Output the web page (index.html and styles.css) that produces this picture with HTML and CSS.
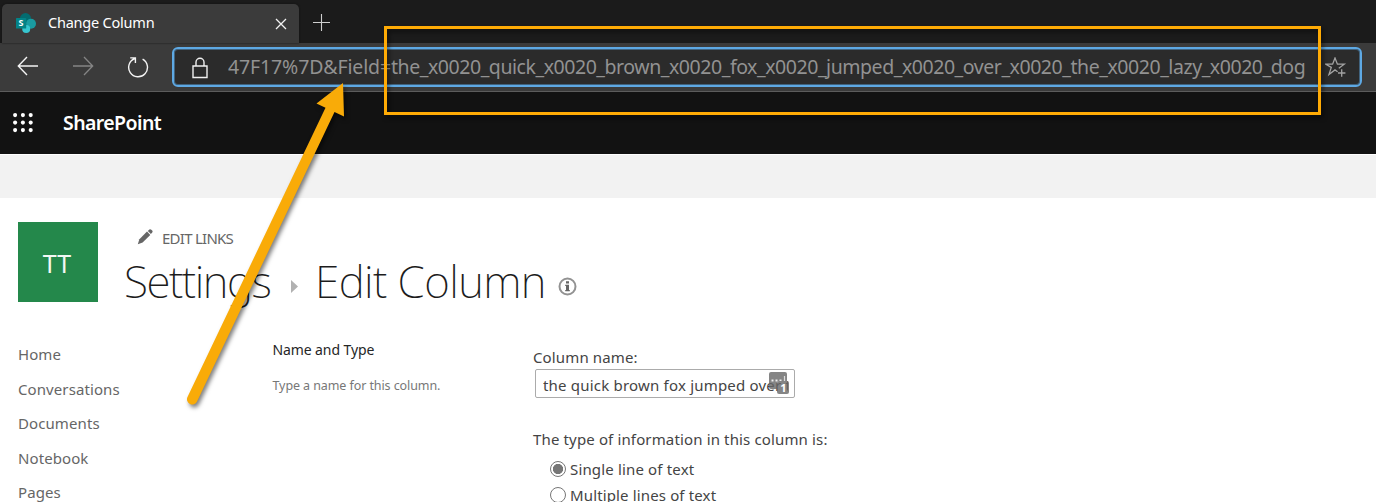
FILE: index.html
```
<!DOCTYPE html>
<html lang="en">
<head>
<meta charset="utf-8">
<title>Change Column</title>
<link rel="stylesheet" href="styles.css">
</head>
<body>
<div class="tabstrip">
  <div class="tab">
    <svg class="favicon" width="20" height="21" viewBox="0 0 20 21">
      <circle cx="9.5" cy="5.7" r="5.6" fill="#036c70"/>
      <circle cx="15" cy="10.8" r="5" fill="#1a9ba1"/>
      <circle cx="10.2" cy="16" r="4" fill="#37c6d0"/>
      <rect x="0" y="5" width="10.2" height="10.5" rx=".6" fill="#038387"/>
      <text class="favicon-letter" x="5.1" y="13.4" text-anchor="middle">S</text>
    </svg>
    <span class="tab-title">Change Column</span>
    <svg class="tab-close" width="12" height="12" viewBox="0 0 12 12"><path d="M1 1l10 10M11 1L1 11" stroke="#f2f2f2" stroke-width="1.3" fill="none"/></svg>
  </div>
  <svg class="tab-new" width="17" height="17" viewBox="0 0 17 17"><path d="M8.5 0v17M0 8.5h17" stroke="#cfcfcf" stroke-width="1.1"/></svg>
</div>
<div class="toolbar">
  <svg class="nav-icon" width="22" height="20" viewBox="0 0 22 20"><path d="M21 10H1.5M10 1L1.3 10l8.700 9" stroke="#f4f4f4" stroke-width="1.4" fill="none"/></svg>
  <svg class="nav-icon forward" width="22" height="20" viewBox="0 0 22 20"><path d="M1 10h19.500M12 1l8.700 9-8.700 9" stroke="#858585" stroke-width="1.3" fill="none"/></svg>
  <svg class="nav-icon reload" width="22" height="22" viewBox="0 0 22 22"><path d="M15.600 3.100A9.400 9.400 0 1 1 7.900 2.500M3.200 1.900h5.200v5.200" stroke="#f4f4f4" stroke-width="1.4" fill="none"/></svg>
  <div class="address">
    <svg class="lock" width="16" height="22" viewBox="0 0 16 22"><path d="M1 9h14v11.500H1zM4 9V5.200a4 4 0 0 1 8 0V9" stroke="#f0f0f0" stroke-width="1.4" fill="none"/></svg>
    <div class="url"><span class="url-head">47F17%7D&amp;Field=</span><span class="url-field">the_x0020_quick_x0020_brown_x0020_fox_x0020_jumped_x0020_over_x0020_the_x0020_lazy_x0020_dog</span></div>
    <svg class="star" width="22" height="22" viewBox="0 0 22 22"><path d="M12.600 14.700L10 12.900l-6 4.500 2.300-7L.8 7.200h6.800L10 1l2.400 6.200h6.800l-5.400 4" stroke="#a3a3a3" stroke-width="1.300" fill="none"/><path d="M16.700 12.300v7.400M13 16h7.400" stroke="#a3a3a3" stroke-width="1.300"/></svg>
  </div>
</div>
<div class="suite">
  <svg width="20" height="20" viewBox="0 0 20 20" fill="#fff"><circle cx="2.100" cy="2.100" r="2.050"/><circle cx="9.900" cy="2.100" r="2.050"/><circle cx="17.700" cy="2.100" r="2.050"/><circle cx="2.100" cy="9.600" r="2.050"/><circle cx="9.900" cy="9.600" r="2.050"/><circle cx="17.700" cy="9.600" r="2.050"/><circle cx="2.100" cy="17.100" r="2.050"/><circle cx="9.900" cy="17.100" r="2.050"/><circle cx="17.700" cy="17.100" r="2.050"/></svg>
  <span class="suite-name">SharePoint</span>
</div>
<div class="ribbon"></div>
<main>
  <header class="site-head">
    <div class="logo">TT</div>
    <div class="heading">
      <div class="edit-links">
        <svg width="16" height="16" viewBox="0 0 16 16" fill="#666"><path d="M.8 15.200l1.600-5L10 2.600l3.300 3.300-7.700 7.600z"/><path d="M10.800 1.900L12.400.5q1-.7 1.900.2l.9.900q.8.900 0 1.900L13.900 5.100z"/></svg>
        <span>EDIT LINKS</span>
      </div>
      <h1><span class="crumb">Settings</span><svg class="sep" width="7" height="13" viewBox="0 0 7 13"><path d="M0 0l7 6.500L0 13z" fill="#b1b1b1"/></svg><span class="current">Edit Column</span><svg class="info" width="19" height="19" viewBox="0 0 19 19"><circle cx="9.500" cy="9.500" r="8" fill="none" stroke="#929292" stroke-width="2"/><path d="M8 4.300h3v2.300H8zM7.200 7.700H11v5.400h.8v1.200H7.200v-1.200H8V8.900h-.8z" fill="#666"/></svg></h1>
    </div>
  </header>
  <div class="body">
    <nav><a>Home</a><a>Conversations</a><a>Documents</a><a>Notebook</a><a>Pages</a></nav>
    <section class="describe">
      <h2>Name and Type</h2>
      <p>Type a name for this column.</p>
    </section>
    <section class="fields">
      <div class="label">Column name:</div>
      <div class="input"><span class="value">the quick brown fox jumped over the lazy dog</span>
        <svg class="badge" width="21" height="24" viewBox="0 0 21 24"><path d="M2 1h14a2 2 0 0 1 2 2v7h-8a2 2 0 0 0-2 2v6H2a2 2 0 0 1-2-2V3a2 2 0 0 1 2-2z" fill="#666" fill-opacity=".8"/><path d="M2.500 9.500h2M6.500 9.500h2M10.500 9.500h2" stroke="#eee" stroke-width="2"/><path d="M15.500 5v5" stroke="#ddd" stroke-width="1.200"/><rect x="8" y="10" width="12" height="13" rx="2" fill="#666" fill-opacity=".8"/><text class="badge-count" x="14.500" y="21" text-anchor="middle">1</text></svg>
      </div>
      <div class="label question">The type of information in this column is:</div>
      <div class="option"><i class="radio on"></i><span class="single">Single line of text</span></div>
      <div class="option"><i class="radio"></i><span>Multiple lines of text</span></div>
    </section>
  </div>
</main>
<svg class="annotation" width="1376" height="502" viewBox="0 0 1376 502">
  <rect x="385.500" y="27.500" width="934" height="86" fill="none" stroke="#ffab05" stroke-width="3"/>
  <path d="M343 83L344 116.500 334.500 112 197 401.500A5 5 0 0 1 187.500 397L325.500 107.800 316.500 103.500Z" fill="#f9ab08"/>
</svg>
</body>
</html>
```

FILE: styles.css
```
* { box-sizing: border-box; }
body { margin: 0; width: 1376px; height: 502px; overflow: hidden; position: relative; background: #fff; color: #444; font-family: "Noto Sans", "Open Sans", sans-serif; }
svg { display: block; flex: none; }
span, a { white-space: nowrap; }

.tabstrip { display: flex; height: 43px; background: #1b1b1b; padding: 4px 0 0 2px; }
.tab { display: flex; width: 297px; height: 39px; background: #3b3b3b; border-radius: 5px 5px 0 0; padding-left: 14px; box-shadow: 0 0 2px #111; }
.favicon { margin-top: 9px; }
.favicon-letter { font: 700 9px "Open Sans", sans-serif; fill: #fff; }
.tab-title { margin-left: 12px; width: 226px; line-height: 37px; font-size: 14.5px; letter-spacing: -.22px; color: #fff; }
.tab-close { margin: 14px 0 0 1px; }
.tab-new { margin: 10px 0 0 14px; }

.toolbar { display: flex; height: 49px; background: #3b3b3b; border-bottom: 1px solid #5c5c5c; padding: 4px 0 0 17px; }
.nav-icon { margin-top: 9px; }
.forward { margin-left: 33px; }
.reload { margin: 9px 0 0 33px; }
.address { display: flex; margin-left: 23px; width: 1190px; height: 40px; margin-right: auto; border: 2px solid #5ea9e4; border-radius: 6px; background: #2b2b2b; padding-left: 18px; box-shadow: inset 0 0 0 1px #41637e; }
.lock { margin-top: 8px; }
.url { display: flex; margin-left: 20px; width: 1098px; overflow: hidden; line-height: 35px; font-size: 19.5px; color: #929292; }
.url-head { width: 163px; letter-spacing: -.13px; }
.url-field { letter-spacing: -.448px; }
.star { margin-top: 8px; margin-left: -1px; }

.suite { display: flex; height: 62px; background: #121212; padding: 21px 0 0 12.500px; }
.suite-name { margin-left: 30.500px; line-height: 20px; font-size: 19.5px; font-weight: 600; letter-spacing: -.59px; color: #fff; }
.ribbon { height: 44px; background: #f2f2f2; border-top: 1px solid #fff; }

.site-head { display: flex; padding: 24px 0 0 18px; height: 140px; }
.logo { width: 80px; height: 80px; background: #24884b; color: #f2f8f4; font-size: 25px; line-height: 82px; text-align: center; padding-right: 2px; }
.heading { margin-left: 26px; }
.edit-links { display: flex; margin-left: 13px; height: 33px; gap: 9px; padding-top: 7px; font-size: 15px; line-height: 19px; letter-spacing: -.74px; color: #666; }
h1 { display: flex; margin: 0; font-size: 44px; font-weight: 200; line-height: 52px; color: #1c1c1c; }
.crumb { letter-spacing: -1.500px; width: 166px; }
.sep { margin-top: 25px; margin-left: 1px; }
.current { margin-left: 17px; letter-spacing: -.600px; width: 243px; }
.info { margin-top: 22px; }

.body { display: grid; grid-template-columns: 254.500px 260.500px 1fr; padding-left: 18px; }
nav { display: flex; flex-direction: column; margin-top: -1px; font-size: 15px; letter-spacing: .090px; line-height: 34.500px; color: #666; }
h2 { margin: 3px 0 0; font-size: 14px; line-height: 18px; font-weight: 400; letter-spacing: -.1px; color: #262626; }
.describe p { margin: 18px 0 0; font-size: 12.500px; line-height: 18px; letter-spacing: -.090px; color: #777; }
.fields { font-size: 15px; letter-spacing: .140px; }
.label { line-height: 20px; margin-top: 9px; }
.input { position: relative; width: 260px; height: 29px; margin: 2px 0 0 2px; border: 1px solid #ababab; border-radius: 2px; padding: 0 6px 0 7px; line-height: 31px; }
.value { display: block; height: 27px; overflow: hidden; letter-spacing: .200px; }
.badge { position: absolute; left: 233px; top: 1px; }
.badge-count { font: 700 11px "Open Sans", sans-serif; fill: #fff; }
.question { margin: 31px 0 7px; }
.option { display: flex; align-items: center; gap: 4px; height: 26px; padding-left: 17px; }
.single { letter-spacing: .160px; }
.radio { width: 16px; height: 16px; border: 1px solid #767676; border-radius: 50%; background: #fff; }
.radio.on { background: radial-gradient(circle, #767676 4.800px, #fff 5.400px); }

.annotation { position: absolute; left: 0; top: 0; filter: drop-shadow(2px 3px 2px rgba(0, 0, 0, .5)); }
```
